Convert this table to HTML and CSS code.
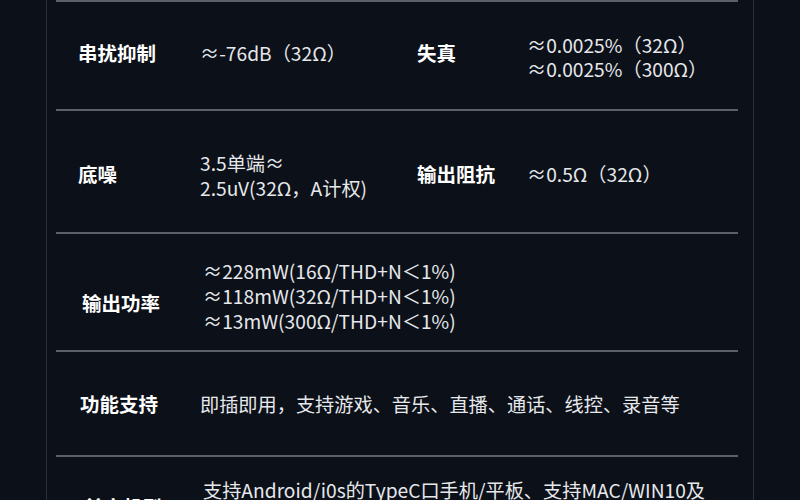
FILE: index.html
```html
<!DOCTYPE html>
<html lang="zh">
<head>
<meta charset="utf-8">
<title>参数</title>
<link rel="stylesheet" href="styles.css">
</head>
<body>
<div class="sheet">
  <div class="row row-first">
    <div class="label">串扰抑制</div>
    <div class="value">≈-76dB（32Ω）</div>
    <div class="label">失真</div>
    <div class="value value-low">≈0.0025%（32Ω）<br>≈0.0025%（300Ω）</div>
  </div>
  <div class="row row-noise">
    <div class="label">底噪</div>
    <div class="value value-loose">3.5单端≈<br>2.5uV(32Ω，A计权)</div>
    <div class="label">输出阻抗</div>
    <div class="value">≈0.5Ω（32Ω）</div>
  </div>
  <div class="row row-power">
    <div class="label label-low">输出功率</div>
    <div class="value value-loose wide">≈228mW(16Ω/THD+N＜1%)<br>≈118mW(32Ω/THD+N＜1%)<br>≈13mW(300Ω/THD+N＜1%)</div>
  </div>
  <div class="row row-func">
    <div class="label">功能支持</div>
    <div class="value wide">即插即用，支持游戏、音乐、直播、通话、线控、录音等</div>
  </div>
  <div class="row row-compat">
    <div class="label">兼容机型</div>
    <div class="value wide">支持Android/i0s的TypeC口手机/平板、支持MAC/WIN10及</div>
  </div>
</div>
</body>
</html>
```

FILE: styles.css
```css
html, body {
  margin: 0;
  padding: 0;
  background: #0c1018;
  overflow: hidden;
}

body {
  width: 800px;
  height: 500px;
  font-family: "Noto Sans CJK SC", "Noto Sans", sans-serif;
}

.sheet {
  margin: 0 46px;
  height: 500px;
  border-left: 1px solid #2a2f38;
  border-right: 1px solid #2a2f38;
  padding: 0 15px 0 9px;
}

.row {
  box-sizing: border-box;
  display: grid;
  grid-template-columns: 122px 217px 110px 1fr;
  align-items: center;
  padding-left: 22px;
  border-bottom: 2px solid #5b6068;
}

.row-first {
  border-top: 2px solid #5b6068;
  height: 111px;
  padding-bottom: 6px;
}

.row-noise {
  height: 123px;
  padding-top: 4px;
}

.row-power {
  height: 118px;
  padding-top: 8px;
  padding-left: 26px;
  grid-template-columns: 121px 1fr;
}

.row-func {
  height: 105px;
  padding-left: 24px;
  grid-template-columns: 120px 1fr;
}

.row-compat {
  height: 100px;
  border-bottom: none;
  align-items: start;
  padding-top: 21px;
  padding-left: 28px;
  grid-template-columns: 119px 1fr;
}

.row-compat .label {
  padding-top: 17px;
}

.label {
  color: #ffffff;
  font-weight: 700;
  font-size: 19.5px;
  line-height: 24px;
}

.label-low {
  padding-top: 13px;
}

.value {
  color: #e6e8ec;
  font-weight: 400;
  font-size: 19.2px;
  line-height: 24px;
}

.value-low {
  padding-top: 8px;
}

.value-loose {
  line-height: 25px;
  padding-top: 4px;
}

.row-power .value-loose {
  padding-top: 0;
}

.wide {
  grid-column: 2 / -1;
}
```
